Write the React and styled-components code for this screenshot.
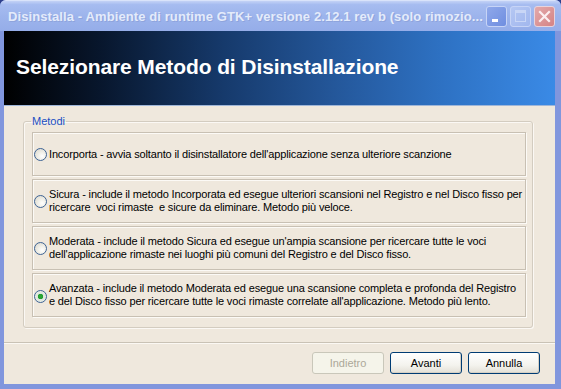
import React from "react";
import styled, { createGlobalStyle } from "styled-components";

const options = [
  {
    id: "incorporta",
    lines: ["Incorporta - avvia soltanto il disinstallatore dell'applicazione senza ulteriore scanzione"],
  },
  {
    id: "sicura",
    lines: [
      "Sicura - include il metodo Incorporata ed esegue ulteriori scansioni nel Registro e nel Disco fisso per",
      "ricercare  voci rimaste  e sicure da eliminare. Metodo più veloce.",
    ],
  },
  {
    id: "moderata",
    lines: [
      "Moderata - include il metodo Sicura ed esegue un'ampia scansione per ricercare tutte le voci",
      "dell'applicazione rimaste nei luoghi più comuni del Registro e del Disco fisso.",
    ],
  },
  {
    id: "avanzata",
    lines: [
      "Avanzata - include il metodo Moderata ed esegue una scansione completa e profonda del Registro",
      "e del Disco fisso per ricercare tutte le voci rimaste correlate all'applicazione. Metodo più lento.",
    ],
    checked: true,
  },
];

const App = () => {
  return (
    <>
      <GlobalStyle />
      <Window>
        <TitleBar>
          <TitleText>Disinstalla - Ambiente di runtime GTK+ versione 2.12.1 rev b (solo rimozio...</TitleText>
          <TitleButtons>
            <CaptionButton $kind="min">
              <MinBar />
            </CaptionButton>
            <CaptionButton $kind="max">
              <MaxBox />
            </CaptionButton>
            <CaptionButton $kind="close">
              <svg width="13" height="13" viewBox="0 0 13 13">
                <path d="M2 2 L11 11 M11 2 L2 11" stroke="#fbeef0" strokeWidth="2.2" strokeLinecap="square" />
              </svg>
            </CaptionButton>
          </TitleButtons>
        </TitleBar>
        <Frame>
          <Banner>
            <BannerTitle>Selezionare Metodo di Disinstallazione</BannerTitle>
          </Banner>
          <Body>
            <GroupBox>
              <Legend>Metodi</Legend>
              <OptionList>
                {options.map((opt) => (
                  <OptionFrame key={opt.id}>
                    <Radio $checked={opt.checked} />
                    <OptionText>
                      {opt.lines.map((l, i) => (
                        <div key={i}>{l}</div>
                      ))}
                    </OptionText>
                  </OptionFrame>
                ))}
              </OptionList>
            </GroupBox>
          </Body>
          <Separator />
          <ButtonRow>
            <DialogButton disabled>Indietro</DialogButton>
            <DialogButton>Avanti</DialogButton>
            <DialogButton>Annulla</DialogButton>
          </ButtonRow>
        </Frame>
      </Window>
    </>
  );
};

// Styled Components
const GlobalStyle = createGlobalStyle`
  html, body {
    margin: 0;
    padding: 0;
    background: #2d3f8c;
  }
  body {
    font-family: "Liberation Sans", Arial, sans-serif;
  }
`;

const Window = styled.div`
  width: 561px;
  height: 389px;
  display: flex;
  flex-direction: column;
  box-sizing: border-box;
  background: #8196dd;
  border-radius: 6px 6px 0 0;
  overflow: hidden;
`;

const TitleBar = styled.div`
  height: 31px;
  flex: none;
  display: flex;
  align-items: center;
  padding: 0 6px 0 8px;
  box-sizing: border-box;
  background: linear-gradient(#c3d2f6 0%, #a6bcf0 12%, #9db4ec 50%, #95ade9 100%);
  border-top: 1px solid #d9e3fa;
`;

const TitleText = styled.div`
  flex: 1;
  color: #e4ebfb;
  font-family: "Liberation Sans", Arial, sans-serif;
  font-weight: bold;
  font-size: 13px;
  letter-spacing: 0.1px;
  white-space: nowrap;
  overflow: hidden;
  text-shadow: 1px 1px 0 #8ea4dc;
`;

const TitleButtons = styled.div`
  display: flex;
  gap: 3px;
`;

const CaptionButton = styled.div`
  width: 21px;
  height: 21px;
  box-sizing: border-box;
  border-radius: 3px;
  border: 1px solid ${(p) => (p.$kind === "close" ? "#e7d3dc" : "#c7d4f6")};
  display: flex;
  align-items: center;
  justify-content: center;
  position: relative;
  background: ${(p) =>
    p.$kind === "close"
      ? "linear-gradient(135deg, #e3a9ab, #d58384)"
      : p.$kind === "max"
      ? "linear-gradient(135deg, #b5c7f3, #a2b7ee)"
      : "linear-gradient(135deg, #8fa8ea, #6f8ee0)"};
`;

const MinBar = styled.div`
  position: absolute;
  left: 5px;
  bottom: 4px;
  width: 6px;
  height: 3px;
  background: #fff;
`;

const MaxBox = styled.div`
  width: 9px;
  height: 8px;
  border: 1px solid #c9d6f6;
  border-top-width: 3px;
`;

const Frame = styled.div`
  flex: 1;
  display: flex;
  flex-direction: column;
  margin: 0 6px 5px 4px;
  background: #efe8dd;
`;

const Banner = styled.div`
  height: 75px;
  flex: none;
  display: flex;
  align-items: center;
  padding: 0 0 2px 12px;
  box-sizing: border-box;
  background: linear-gradient(
    to right,
    #000000 0%,
    #08172e 18%,
    #163a6c 40%,
    #24579a 60%,
    #2e72c4 80%,
    #3a8ae6 100%
  );
  border-bottom: 1px solid #9fb6d8;
`;

const BannerTitle = styled.h1`
  margin: 0;
  color: #ffffff;
  font-family: "Liberation Sans", Arial, sans-serif;
  font-weight: bold;
  font-size: 21px;
  letter-spacing: -0.1px;
`;

const Body = styled.div`
  padding: 9px 22px 0 19px;
`;

const GroupBox = styled.fieldset`
  margin: 0;
  min-width: 0;
  padding: 5px 6px 10px 8px;
  border: 1px solid #d3ccc0;
  border-radius: 3px;
  box-shadow: inset 1px 1px 0 #fbf8f4, 1px 1px 0 #fbf8f4;
`;

const Legend = styled.legend`
  padding: 0 1px;
  margin-left: -1px;
  color: #1a4fc4;
  font-family: "Liberation Sans", Arial, sans-serif;
  font-size: 11px;
`;

const OptionList = styled.div`
  display: flex;
  flex-direction: column;
  gap: 3px;
`;

const OptionFrame = styled.div`
  height: 42px;
  display: flex;
  align-items: center;
  gap: 2px;
  padding-left: 1px;
  border: 1px solid #c8c0b3;
  box-shadow: inset 1px 1px 0 #fcfaf6, 1px 1px 0 #fcfaf6;
`;

const Radio = styled.div`
  width: 13px;
  height: 13px;
  flex: none;
  box-sizing: border-box;
  border-radius: 50%;
  border: 1px solid #3d6394;
  background: ${(p) =>
    p.$checked
      ? "radial-gradient(circle, #2fa33a 0, #21a12d 2.5px, #dce6dc 3px, #f5f4ee 100%)"
      : "radial-gradient(circle at 65% 65%, #ffffff 0, #f0efe8 40%, #d6d3c8 100%)"};
  margin-top: ${(p) => (p.$checked ? "2px" : "0")};
`;

const OptionText = styled.div`
  font-family: "Liberation Sans", Arial, sans-serif;
  font-size: 11px;
  letter-spacing: -0.15px;
  line-height: 13px;
  color: #000;
  white-space: pre;
`;

const Separator = styled.div`
  margin-top: 14px;
  height: 1px;
  background: #c9c2b5;
  border-bottom: 1px solid #fbf8f3;
`;

const ButtonRow = styled.div`
  display: flex;
  justify-content: flex-end;
  gap: 6px;
  padding: 8px 15px 0 0;
`;

const DialogButton = styled.button`
  width: 72px;
  height: 22px;
  padding: 0;
  font-family: "Liberation Sans", Arial, sans-serif;
  font-size: 11px;
  color: #000;
  border-radius: 3px;
  border: 1px solid #003c74;
  background: linear-gradient(#ffffff 0%, #f4f3ee 60%, #e3e0d6 100%);
  box-shadow: inset -1px -1px 0 #d6d0c5;

  &:disabled {
    color: #aca899;
    border-color: #c9c7ba;
    background: #f5f4ea;
    box-shadow: none;
  }
`;

export default App;
